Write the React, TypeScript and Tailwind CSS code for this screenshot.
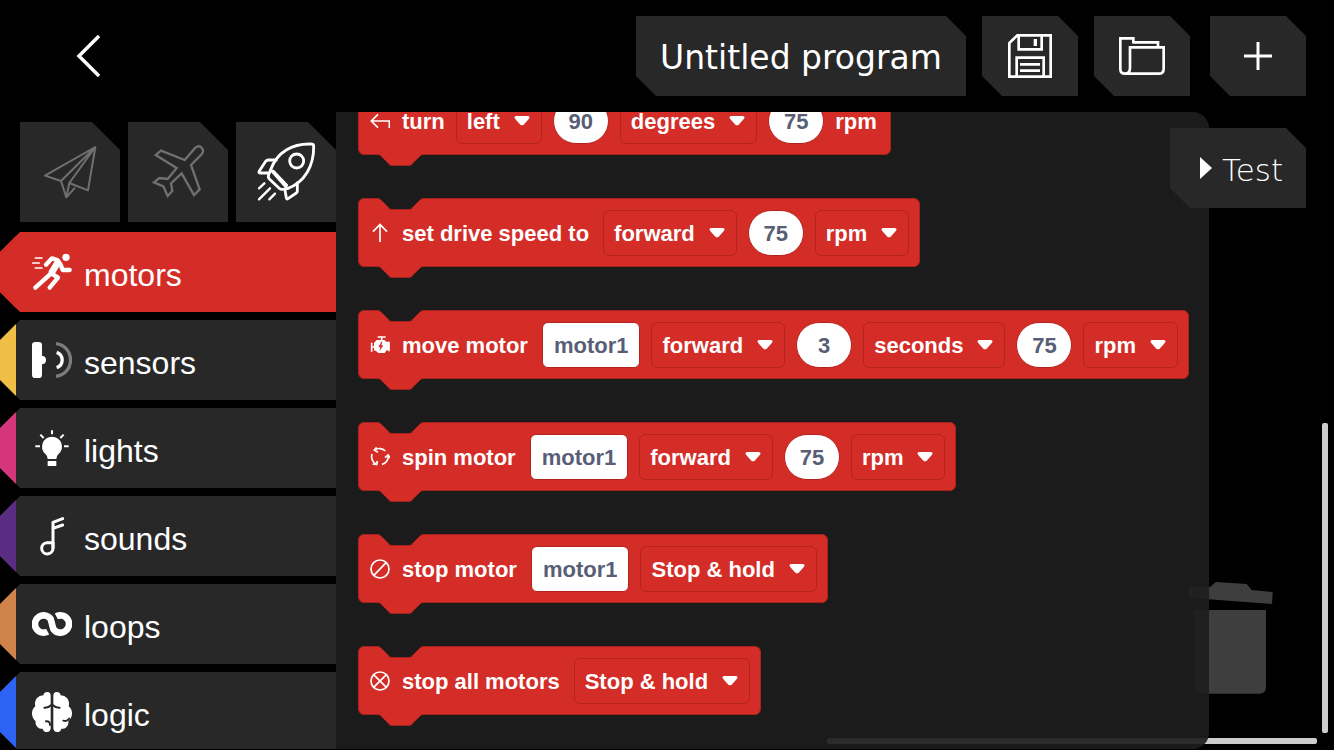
import { useLayoutEffect, useRef, type ReactNode } from "react";

const DIRECTIONS = ["forward", "backward"];
const UNITS = ["rpm", "%"];
const STOP_MODES = ["Stop & hold", "Stop & coast"];

function Text({ children, tight = false }: { children: ReactNode; tight?: boolean }) {
  return <span className={tight ? "pt-[2px] whitespace-nowrap" : "pt-[2px] pr-[3px] whitespace-nowrap"}>{children}</span>;
}

function Choice({ label, options }: { label: string; options: string[] }) {
  return (
    <span className="grid items-center">
      <select
        aria-label={label}
        className="col-start-1 row-start-1 h-[46px] field-sizing-content appearance-none rounded-md border border-[#b3241f] bg-transparent pt-[2px] pr-[41px] pl-[10px] font-bold outline-none"
      >
        {options.map((option) => (
          <option key={option} className="bg-[#d42c27]">
            {option}
          </option>
        ))}
      </select>
      <svg className="pointer-events-none col-start-1 row-start-1 mr-3 h-[10px] w-4 justify-self-end" viewBox="0 0 48 30" aria-hidden="true">
        <path d="M6 0H42Q49 1 45 8L29 26Q24 30 19 26L3 8Q-1 1 6 0Z" fill="white" />
      </svg>
    </span>
  );
}

function NumberField({ label, value }: { label: string; value: string }) {
  return (
    <input
      aria-label={label}
      defaultValue={value}
      inputMode="numeric"
      className="h-[46px] w-14 rounded-full border border-[#b3241f] bg-white pt-[2px] text-center font-bold text-[#575e75] outline-none"
    />
  );
}

function NameField({ label, value }: { label: string; value: string }) {
  return (
    <input
      aria-label={label}
      defaultValue={value}
      className="h-[46px] field-sizing-content rounded-md border border-[#b3241f] bg-white px-[11px] pt-[2px] text-center font-bold text-[#575e75] outline-none"
    />
  );
}

function Block({ icon, children }: { icon: ReactNode; children: ReactNode }) {
  return (
    <li className="relative flex h-[69px] w-max items-center gap-[11px] rounded-md border border-[#a8231f] bg-[#d42c27] pr-[10px] pl-[11px]">
      <svg className="absolute -top-px left-[18px] h-3 w-12" viewBox="0 0 48 12" aria-hidden="true">
        <path d="M0 0C2 0 3 1 4 2L11 9C12 10.500 13 11.500 15 11.500H32C34 11.500 35 10.500 36 9L43 2C44 1 45 0 48 0Z" fill="#1b1b1b" />
        <path d="M0 .5C2 .5 3 1 4 2L11 9C12 10.500 13 11.500 15 11.500H32C34 11.500 35 10.500 36 9L43 2C44 1 45 .5 48 .5" fill="none" stroke="#a8231f" />
      </svg>
      <svg className="absolute top-[67px] left-[18px] h-3 w-12" viewBox="0 0 48 12" aria-hidden="true">
        <path d="M0 0C2 0 3 1 4 2L11 9C12 10.500 13 11.500 15 11.500H32C34 11.500 35 10.500 36 9L43 2C44 1 45 0 48 0Z" fill="#d42c27" />
        <path d="M0 .5C2 .5 3 1 4 2L11 9C12 10.500 13 11.500 15 11.500H32C34 11.500 35 10.500 36 9L43 2C44 1 45 .5 48 .5" fill="none" stroke="#a8231f" />
      </svg>
      <svg className="mr-px size-5 shrink-0" viewBox="0 0 60 60" fill="none" stroke="white" strokeWidth="5" aria-hidden="true">
        {icon}
      </svg>
      {children}
    </li>
  );
}

function Category({ name, color, active = false, children }: { name: string; color: string; active?: boolean; children: ReactNode }) {
  return (
    <li>
      <button
        className={`flex h-20 w-full items-center gap-3 border-l-16 pl-4 text-[32px] leading-10 text-white [clip-path:polygon(20px_0,100%_0,100%_100%,20px_100%,0_60px,0_20px)] ${color} ${
          active ? "bg-[#d42c27]" : "bg-[#282828]"
        }`}
      >
        {children}
        <span className="pt-[6px]">{name}</span>
      </button>
    </li>
  );
}

function CategoryIcon({ children }: { children: ReactNode }) {
  return (
    <svg className="size-10 shrink-0" viewBox="0 0 120 120" fill="none" stroke="white" strokeLinecap="round" strokeLinejoin="round" aria-hidden="true">
      {children}
    </svg>
  );
}

function LevelTab({ label, children }: { label: string; children: ReactNode }) {
  return (
    <button aria-label={label} className="size-[100px] bg-[#282828] [clip-path:polygon(0_0,72px_0,100%_28px,100%_100%,0_100%)]">
      <svg className="size-full" viewBox="0 0 300 300" fill="none" strokeLinejoin="round" aria-hidden="true">
        {children}
      </svg>
    </button>
  );
}

function ToolButton({ label, children }: { label: string; children: ReactNode }) {
  return (
    <button
      aria-label={label}
      className="flex h-20 w-24 items-center justify-center bg-[#282828] [clip-path:polygon(0_0,calc(100%-20px)_0,100%_20px,100%_100%,20px_100%,0_calc(100%-20px))]"
    >
      {children}
    </button>
  );
}

function Palette() {
  const scroller = useRef<HTMLDivElement>(null);
  useLayoutEffect(() => {
    if (scroller.current) scroller.current.scrollTop = scroller.current.scrollHeight;
  }, []);
  return (
    <div
      ref={scroller}
      className="relative mr-[125px] mb-px min-w-0 flex-1 overflow-x-hidden overflow-y-auto rounded-r-2xl bg-[#1d1d1d]/92 [scrollbar-width:none]"
    >
      <ul className="flex flex-col gap-[43px] pb-[34px] pl-[22px] text-[22px] leading-7 font-bold text-white">
        <Block icon={<path d="M24 10 4 30 24 50M4 30H58V51" />}>
          <Text tight>turn</Text>
          <Choice label="Turn direction" options={["left", "right"]} />
          <NumberField label="Turn amount" value="90" />
          <Choice label="Turn unit" options={["degrees", "rotations"]} />
          <NumberField label="Turn speed" value="75" />
          <Text>rpm</Text>
        </Block>
        <Block icon={<path d="M30 57V4M9 26 30 4 51 26" />}>
          <Text>set drive speed to</Text>
          <Choice label="Drive direction" options={DIRECTIONS} />
          <NumberField label="Drive speed" value="75" />
          <Choice label="Drive speed unit" options={UNITS} />
        </Block>
        <Block
          icon={
            <>
              <path d="M23 6H47M35 6V16M5 23V50M5 36H14M57 20V49" strokeWidth="5" />
              <path d="M20 15H44L48 20H57V46H50L44 54H25L18 48L12 46V24Z" fill="white" stroke="none" />
              <path d="M34 20 25 37H31L29 48 40 31H34L37 20Z" fill="#d42c27" stroke="none" />
            </>
          }
        >
          <Text>move motor</Text>
          <NameField label="Motor to move" value="motor1" />
          <Choice label="Move direction" options={DIRECTIONS} />
          <NumberField label="Move duration" value="3" />
          <Choice label="Duration unit" options={["seconds", "degrees"]} />
          <NumberField label="Move speed" value="75" />
          <Choice label="Move speed unit" options={UNITS} />
        </Block>
        <Block
          icon={
            <>
              <path d="M14 9A25 25 0 0 1 46 12M55 26A25 25 0 0 1 36 52M18 51A25 25 0 0 1 6 21" />
              <path d="M20 1 13 9 24 16M45 32 54 24 61 33M22 42 20 53 8 51" />
            </>
          }
        >
          <Text>spin motor</Text>
          <NameField label="Motor to spin" value="motor1" />
          <Choice label="Spin direction" options={DIRECTIONS} />
          <NumberField label="Spin speed" value="75" />
          <Choice label="Spin speed unit" options={UNITS} />
        </Block>
        <Block
          icon={
            <>
              <circle cx="30" cy="30" r="27" />
              <path d="M11 50 49 10" />
            </>
          }
        >
          <Text>stop motor</Text>
          <NameField label="Motor to stop" value="motor1" />
          <Choice label="Stop mode" options={STOP_MODES} />
        </Block>
        <Block
          icon={
            <>
              <circle cx="30" cy="30" r="27" />
              <path d="M10 50 50 10M10 10 50 50" />
            </>
          }
        >
          <Text>stop all motors</Text>
          <Choice label="Stop mode for all motors" options={STOP_MODES} />
        </Block>
      </ul>
    </div>
  );
}

export default function App() {
  return (
    <div className="flex h-screen flex-col overflow-hidden bg-black font-['Liberation_Sans',Arial,sans-serif] text-white">
      <header className="flex h-28 shrink-0 items-center pr-7 pl-[68px]">
        <button aria-label="Back" className="mr-auto flex size-10 items-center justify-center">
          <svg className="h-[42px] w-6 shrink-0" viewBox="0 0 24 42" fill="none" stroke="white" strokeWidth="3.500" aria-hidden="true">
            <path d="M23 1 3 21 23 41" />
          </svg>
        </button>
        <div className="flex gap-4">
          <input
            aria-label="Program name"
            defaultValue="Untitled program"
            className="h-20 w-[330px] bg-[#282828] pt-[2px] text-center font-['DejaVu_Sans',sans-serif] text-[33px] outline-none [clip-path:polygon(0_0,calc(100%-20px)_0,100%_20px,100%_100%,20px_100%,0_calc(100%-20px))]"
          />
          <ToolButton label="Save program">
            <svg className="size-11" viewBox="0 0 132 132" fill="none" stroke="white" strokeWidth="8" aria-hidden="true">
              <path d="M28 4H128V128H4V27ZM32 4V46H101V4M26 128V71H107V128" />
              <path d="M36 91H96M36 110H96" />
              <path d="M82 15V36" strokeWidth="10" />
            </svg>
          </ToolButton>
          <ToolButton label="Open program">
            <svg className="h-[38px] w-[46px]" viewBox="0 0 138 114" fill="none" stroke="white" strokeWidth="8" aria-hidden="true">
              <path d="M43 18V4H4V96Q4 110 18 110H119Q134 110 134 95V31H33V93Q33 110 18 110" />
              <path d="M40 16H117V30" />
            </svg>
          </ToolButton>
        </div>
        <div className="ml-5">
          <ToolButton label="New program">
            <svg className="size-7" viewBox="0 0 28 28" stroke="white" strokeWidth="3" aria-hidden="true">
              <path d="M14 0V28M0 14H28" />
            </svg>
          </ToolButton>
        </div>
      </header>

      <div className="flex min-h-0 flex-1">
        <aside className="mb-px w-[336px] shrink-0 overflow-hidden pt-[10px]">
          <div className="flex gap-2 pl-5">
            <LevelTab label="Beginner">
              <g stroke="#707070" strokeWidth="6">
                <path d="M226 75 75 161 123 177 139 226 165 197M226 75 123 177M226 75 204 205 148 183ZM148 183 139 226" />
              </g>
            </LevelTab>
            <LevelTab label="Intermediate">
              <path
                d="M170 114 99 86 83 99 146 138 119 171 94 168 78 181 106 193 119 222 133 207 129 184 161 154 198 219 215 202 189 129 220 98C233 83 217 66 202 77Z"
                stroke="#707070"
                strokeWidth="7"
                strokeLinejoin="miter"
              />
            </LevelTab>
            <LevelTab label="Advanced">
              <g stroke="white" strokeWidth="8.500" strokeLinecap="round">
                <path d="M226 66Q233 66 233 73C234 130 207 181 154 200L104 143C123 90 169 64 226 66Z" />
                <path d="M104 143 98 158Q95 166 101 172L131 200Q135 203 140 202L154 200M112 148 152 190" />
                <path d="M121 114H97Q92 114 89 118L70 147Q67 153 72 153H98M184 183V207Q184 211 181 213L156 230Q152 233 151 228L147 204" />
                <circle cx="182" cy="117" r="21" />
                <path d="M69 199 85 184M69 232 102 199M100 232 117 215" strokeWidth="7" />
              </g>
            </LevelTab>
          </div>
          <ul className="mt-[10px] flex flex-col gap-2">
            <Category name="motors" color="border-[#d42c27]" active>
              <CategoryIcon>
                <circle cx="102" cy="16" r="11" fill="white" stroke="none" />
                <path d="M10 18H30M2 33H22M10 48H30" strokeWidth="5" />
                <path d="M42 38 60 19 76 24 86 38 92 54H113M60 62 10 107M58 64 78 77 53 107" strokeWidth="13" />
                <path d="M77 32 60 60" strokeWidth="20" />
              </CategoryIcon>
            </Category>
            <Category name="sensors" color="border-[#efbe45]">
              <CategoryIcon>
                <rect y="6" width="30" height="108" rx="10" fill="white" stroke="none" />
                <path d="M28 47C38 47 42 52 42 60S38 73 28 73Z" fill="white" stroke="none" />
                <path d="M74 37C96 45 96 75 74 83" strokeWidth="10" strokeLinecap="butt" />
                <path d="M72 11C130 18 130 102 72 109" stroke="#7d7d7d" strokeWidth="10" strokeLinecap="butt" />
              </CategoryIcon>
            </Category>
            <Category name="lights" color="border-[#d4357b]">
              <CategoryIcon>
                <path d="M60 26A30 30 0 0 0 41 79Q47 84 47 93H73Q73 84 79 79A30 30 0 0 0 60 26ZM47 99H73V114H47Z" fill="white" stroke="none" />
                <path d="M60 7V19M10 55H24M96 55H110M25 20 35 30M95 20 85 30" strokeWidth="6" strokeLinecap="butt" />
              </CategoryIcon>
            </Category>
            <Category name="sounds" color="border-[#5a2d82]">
              <CategoryIcon>
                <path d="M63 97V19L92 8M63 37 92 27" strokeWidth="9" />
                <path d="M63 80H45A17 17 0 1 0 63 97Z" strokeWidth="9" />
              </CategoryIcon>
            </Category>
            <Category name="loops" color="border-[#d0844c]">
              <CategoryIcon>
                <path d="M47 83A26 26 0 1 1 56 45L64 75A26 26 0 1 0 73 37" strokeWidth="20" strokeLinecap="butt" />
              </CategoryIcon>
            </Category>
            <Category name="logic" color="border-[#2c63f4]">
              <CategoryIcon>
                <g fill="white" stroke="none">
                  <path d="M46 0Q56 0 56 11V109Q55 120 45 120Q34 120 32 110Q24 112 17 106Q9 99 11 88Q-1 78 0 61Q1 50 10 42Q6 28 15 18Q22 10 34 10Q36 0 46 0Z" />
                  <path d="M74 0Q64 0 64 11V109Q65 120 75 120Q86 120 88 110Q96 112 103 106Q111 99 109 88Q121 78 120 61Q119 50 110 42Q114 28 105 18Q98 10 86 10Q84 0 74 0Z" />
                </g>
                <path d="M37 47Q49 48 58 39M83 47Q71 48 62 39M42 88Q54 87 54 99M112 80Q105 90 94 86" stroke="#282828" strokeWidth="6" />
              </CategoryIcon>
            </Category>
          </ul>
        </aside>

        <main className="relative flex min-w-0 flex-1">
          <svg className="absolute right-15 bottom-[56px] h-[113px] w-[86px]" viewBox="174 63 258 339" fill="#3e3e3e" aria-hidden="true">
            <path d="M177 77 240 81 258 66 350 72 365 90 428 96 426 132 176 113ZM192 150H408V381Q408 401 388 401H212Q192 401 192 381Z" />
          </svg>
          <div className="absolute right-[6px] bottom-[17px] h-[310px] w-[6px] rounded-xs bg-[#cecdce]" />
          <div className="absolute right-[17px] bottom-[6px] h-[6px] w-[490px] rounded-xs bg-[#cecdce]" />
          <Palette />
          <button className="absolute top-4 right-7 flex h-20 w-[136px] items-center gap-[10px] bg-[#282828] pl-[30px] font-['DejaVu_Sans',sans-serif] text-[31px] leading-8 font-extralight [clip-path:polygon(0_0,calc(100%-20px)_0,100%_20px,100%_100%,20px_100%,0_calc(100%-20px))]">
            <svg className="h-[22px] w-3 shrink-0" viewBox="0 0 12 22" fill="white" aria-hidden="true">
              <path d="M0 0 12 11 0 22Z" />
            </svg>
            <span className="pt-[3px]">Test</span>
          </button>
        </main>
      </div>
    </div>
  );
}
